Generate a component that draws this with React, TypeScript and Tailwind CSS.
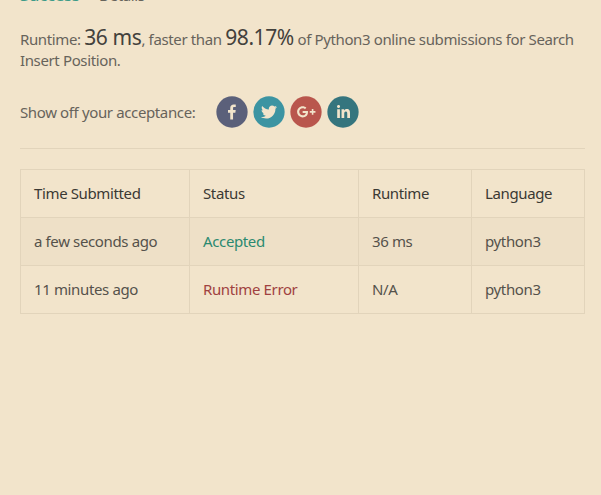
const socials = [
  {
    name: "Facebook",
    color: "#5b607a",
    d: "M34.1,47V33.3h4.6l0.7-5.3h-5.3v-3.4c0-1.5,0.4-2.6,2.6-2.6l2.8,0v-4.8c-0.5-0.1-2.2-0.2-4.1-0.2c-4.1,0-6.9,2.5-6.9,7V28H24v5.3h4.5V47H34.1z",
  },
  {
    name: "Twitter",
    color: "#3c94a2",
    d: "M48,22.1c-1.2,0.5-2.4,0.9-3.8,1c1.4-0.8,2.4-2.1,2.9-3.6c-1.3,0.8-2.7,1.3-4.2,1.6C41.7,19.8,40,19,38.2,19c-3.6,0-6.6,2.9-6.6,6.6c0,0.5,0.1,1,0.2,1.5c-5.5-0.3-10.3-2.9-13.5-6.9c-0.6,1-0.9,2.1-0.9,3.3c0,2.3,1.2,4.3,2.9,5.5c-1.1,0-2.1-0.3-3-0.8c0,0,0,0.1,0,0.1c0,3.2,2.3,5.8,5.3,6.4c-0.6,0.1-1.1,0.2-1.7,0.2c-0.4,0-0.8,0-1.2-0.1c0.8,2.6,3.3,4.5,6.1,4.6c-2.2,1.8-5.1,2.8-8.2,2.8c-0.5,0-1.1,0-1.6-0.1c2.9,1.9,6.4,2.9,10.1,2.9c12.1,0,18.7-10,18.7-18.7c0-0.3,0-0.6,0-0.8C46,24.5,47.1,23.4,48,22.1z",
  },
  {
    name: "Google Plus",
    color: "#b9564d",
    d: "M25.3,30.1v3.8h6.3c-0.3,1.6-1.9,4.8-6.3,4.8c-3.8,0-6.9-3.1-6.9-7s3.1-7,6.9-7c2.2,0,3.6,0.9,4.4,1.7l3-2.9c-1.9-1.8-4.4-2.9-7.4-2.9c-6.2,0-11.1,5-11.1,11.1s5,11.1,11.1,11.1c6.4,0,10.7-4.5,10.7-10.9c0-0.7-0.1-1.3-0.2-1.8H25.3z M43.6,26h3.2v4.1h4.1v3.2h-4.1v4.1h-3.2v-4.1h-4.1v-3.2h4.1z",
  },
  {
    name: "LinkedIn",
    color: "#35757e",
    d: "M20.4,44h5.4V26.6h-5.4V44z M23.1,18c-1.7,0-3.1,1.4-3.1,3.1c0,1.7,1.4,3.1,3.1,3.1c1.7,0,3.1-1.4,3.1-3.1C26.2,19.4,24.8,18,23.1,18z M39.5,26.2c-2.6,0-4.4,1.4-5.1,2.8h-0.1v-2.4h-5.2V44h5.4v-8.6c0-2.3,0.4-4.5,3.2-4.5c2.8,0,2.8,2.6,2.8,4.6V44H46v-9.5C46,29.8,45,26.2,39.5,26.2z",
  },
];

const submissions = [
  { time: "a few seconds ago", status: "Accepted", tone: "text-[#2b8a70]", runtime: "36 ms", language: "python3", row: "bg-[#eee0c7]" },
  { time: "11 minutes ago", status: "Runtime Error", tone: "text-[#a04140]", runtime: "N/A", language: "python3", row: "" },
];

const cell = "border border-[#e2d4bb] px-[13px] py-0 text-left font-normal whitespace-nowrap";

export default function App() {
  return (
    <main className="h-[495px] w-[601px] overflow-hidden bg-[#f2e4cb] pr-4 pl-5 font-['Noto_Sans',sans-serif] text-[15px] tracking-[-0.37px] text-[#67635b]">
      <header className="flex h-[27px] items-start">
        <h1 className="-mt-[17px] w-[79px] text-[17px] leading-6 font-medium tracking-[-0.5px] text-[#3d9b88]">Success</h1>
        <a className="-mt-[15px] flex items-center gap-1 text-[15px] leading-5">
          Details
          <svg className="size-3" viewBox="0 0 12 12" fill="none" stroke="currentColor">
            <path d="M4 0l4 4-4 4" />
          </svg>
        </a>
      </header>

      <p className="h-[69px] leading-[21px]">
        Runtime: <span className="text-[21px] leading-[21px] tracking-[-0.4px] text-[#43413c]">36 ms</span>, faster than{" "}
        <span className="text-[21px] leading-[21px] tracking-[-0.4px] text-[#43413c]">98.17%</span> of Python3 online submissions
        for Search Insert Position.
      </p>

      <section className="flex h-8 items-center">
        <span className="w-[196px]">Show off your acceptance:</span>
        <div className="flex gap-[5px]">
          {socials.map((s) => (
            <svg key={s.name} className="size-8" viewBox="0 0 64 64" aria-label={s.name}>
              <circle cx="32" cy="32" r="31.3" fill={s.color} />
              <path d={s.d} fill="#f2e4cb" />
            </svg>
          ))}
        </div>
      </section>

      <hr className="mt-5 mb-5 border-[#e2d4bb]" />

      <table className="w-[565px] table-fixed border-collapse text-[#55524b]">
        <colgroup>
          <col className="w-[169px]" />
          <col className="w-[169px]" />
          <col className="w-[113px]" />
          <col className="w-[113px]" />
        </colgroup>
        <thead>
          <tr className="h-12 text-[#3b3934]">
            <th className={cell}>Time Submitted</th>
            <th className={cell}>Status</th>
            <th className={cell}>Runtime</th>
            <th className={cell}>Language</th>
          </tr>
        </thead>
        <tbody>
          {submissions.map((s) => (
            <tr key={s.time} className={`h-12 ${s.row}`}>
              <td className={cell}>{s.time}</td>
              <td className={`${cell} ${s.tone}`}>{s.status}</td>
              <td className={cell}>{s.runtime}</td>
              <td className={cell}>{s.language}</td>
            </tr>
          ))}
        </tbody>
      </table>
    </main>
  );
}
